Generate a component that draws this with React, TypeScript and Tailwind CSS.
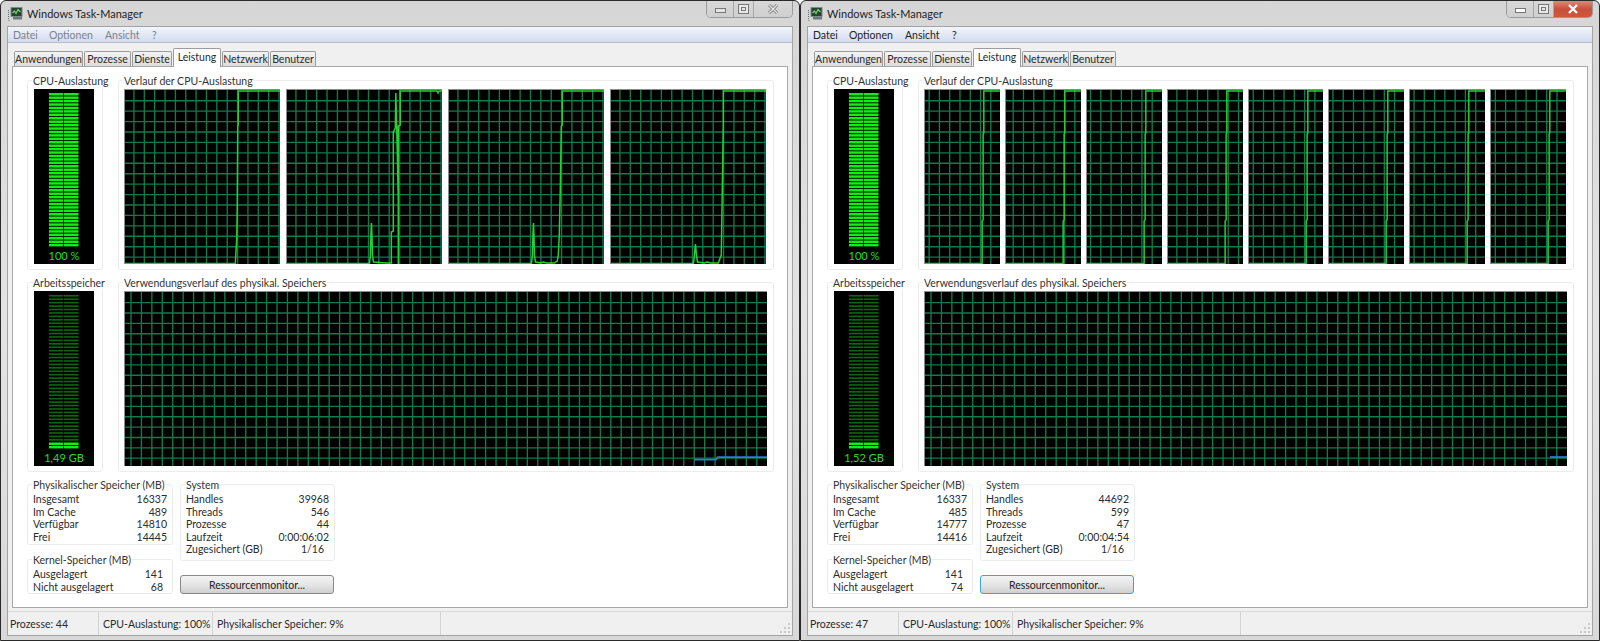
const GREEN = '#2ad032'

const LEFT_PATHS = [
  'M0 173.5 H111 L111.5 165 L112.5 148 L113 115 L113.5 36 L114 35 V1 H156',
  'M0 173.5 H83 L84 165 L84.5 144 L85 133 L85.5 144 L86 165 L87 172 L100 173 H105 V142 L107 141 V42 L109 38 L109.5 3 L110.5 40 L112 110 L112 175 M112 130 V36 L114 35 V1 H151 L152 3 L153 1 H156',
  'M0 173.5 H83 L84 165 L84.5 144 L85 133 L85.5 144 L86 165 L87 172 L92 173 L95 172 L98 173 L106 173 L109 171 L110 165 L111 145 L112 100 L113 36 L114 35 V1 H156',
  'M0 173.5 H83 L84 165 L85 154 L86 165 L87 172 L94 173 L97 172 L100 173 L108 173 L111 165 L112 100 L113 36 V1 H156',
]

const RIGHT_PATH = 'M0 173.5 H58 V131 L59 130 V44 L59.7 43 V1 H76'
const RIGHT_OFFSETS = [4.2, 7.3, 3.6, 9, 4.3, 4, 4.1, 4.4]

function Grid({ w, h, dx, dy = 10.7 }: { w: number; h: number; dx: number; dy?: number }) {
  const xs: number[] = []
  const ys: number[] = []
  for (let x = dx; x < w; x += 10.43) xs.push(x)
  for (let y = dy; y < h; y += 10.43) ys.push(y)
  return (
    <g stroke="#0f7d4a" strokeWidth="1.35">
      {xs.map(x => <line key={x} x1={x} x2={x} y1={0} y2={h} />)}
      {ys.map(y => <line key={y} x1={0} x2={w} y1={y} y2={y} />)}
    </g>
  )
}

function CpuGraph({ w, dx, path }: { w: number; dx: number; path: string }) {
  return (
    <div className="flex-1 h-full bg-black border-t border-l border-[#8c8c8c] min-w-0">
      <svg className="block w-full h-full" viewBox={`0 0 ${w} 174`} preserveAspectRatio="none">
        <Grid w={w} h={174} dx={dx} />
        <path d={path} fill="none" stroke={GREEN} strokeWidth="1.5" />
      </svg>
    </div>
  )
}

function Meter({ label, dim }: { label: string; dim?: boolean }) {
  const rows = Array.from({ length: 45 }, (_, i) => i)
  return (
    <div className="h-full bg-black flex flex-col items-center pt-[4px]">
      <svg width="30" height="155" viewBox="0 0 30 155" className="block">
        {rows.map(i => {
          const y = i * 3.43
          const lit = !dim || i > 42
          const color = lit ? '#10f010' : '#0c6a0c'
          return (
            <g key={i} fill={color}>
              <rect x="0" y={y} width="14" height={dim && !lit ? 1.6 : 2.5} />
              <rect x="15" y={y} width="14.5" height={dim && !lit ? 1.6 : 2.5} />
            </g>
          )
        })}
      </svg>
      <div className="text-[11px] leading-[14px] text-[#1fe01f] mt-[1px]">{label}</div>
    </div>
  )
}

function Group({ title, className, children }: { title: string; className: string; children: React.ReactNode }) {
  return (
    <div className={`border border-[#ececec] rounded-[3px] ${className}`}>
      <div className="-mt-[7px] ml-[4px] w-fit bg-white px-[1px] leading-[14px] text-[#333] whitespace-nowrap">{title}</div>
      {children}
    </div>
  )
}

function Rows({ rows, right }: { rows: [string, string, string?][]; right: string }) {
  return (
    <div className={`pl-[5px] mt-[1px] ${right}`}>
      {rows.map(([k, v, cls]) => (
        <div key={k} className="flex justify-between h-[12.6px] leading-[13px] text-[#2c2c2c] whitespace-nowrap">
          <span>{k}</span>
          <span className={cls}>{v}</span>
        </div>
      ))}
    </div>
  )
}

function AppIcon() {
  return (
    <svg width="15" height="14" viewBox="0 0 15 14" className="block">
      <rect x="3" y="0.5" width="11" height="9" fill="#2f3d37" stroke="#7d8a85" />
      <path d="M4.5 6 L6.5 4 L8 6.5 L10 2.5 L12.5 5" fill="none" stroke="#5fe05f" strokeWidth="1.2" />
      <rect x="5" y="10" width="9" height="2.5" fill="#6f7874" />
      <path d="M0.5 3 V12 M0.5 13.5 H2" stroke="#666" strokeWidth="1" strokeDasharray="1 1" />
    </svg>
  )
}

function Controls({ active }: { active?: boolean }) {
  return (
    <div className="flex h-[17px] w-[87px] border border-t-0 border-[#9a9a9a] rounded-b-[5px] overflow-hidden shrink-0">
      <div className="w-[27px] flex items-center justify-center border-r border-[#a8a8a8] bg-gradient-to-b from-[#d8d8d8] to-[#cfcfcf]">
        <div className={`w-[11px] h-[5px] mt-[3px] border border-[#777] ${active ? 'bg-white' : 'bg-[#e4e4e4]'}`} />
      </div>
      <div className="w-[20px] flex items-center justify-center border-r border-[#a8a8a8] bg-gradient-to-b from-[#d8d8d8] to-[#cfcfcf]">
        <div className="w-[11px] h-[10px] border border-[#777] flex items-center justify-center bg-[#e8e8e8]">
          <div className="w-[5px] h-[4px] border border-[#777]" />
        </div>
      </div>
      <div className={`flex-1 flex items-center justify-center ${active ? 'bg-gradient-to-b from-[#d98a78] via-[#c9503a] to-[#d0563a]' : 'bg-gradient-to-b from-[#d8d8d8] to-[#cfcfcf]'}`}>
        <svg width="12" height="10" viewBox="0 0 12 10">
          {active
            ? <path d="M2 1 L10 9 M10 1 L2 9" stroke="#fff" strokeWidth="2.4" />
            : <g><path d="M2 1 L10 9 M10 1 L2 9" stroke="#777" strokeWidth="3" /><path d="M2 1 L10 9 M10 1 L2 9" stroke="#e6e6e6" strokeWidth="1.4" /></g>}
        </svg>
      </div>
    </div>
  )
}

const TABS = [
  { label: 'Anwendungen', w: 'w-[69px]' },
  { label: 'Prozesse', w: 'w-[47px]' },
  { label: 'Dienste', w: 'w-[40px]' },
  { label: 'Leistung', w: 'w-[48px]', on: true },
  { label: 'Netzwerk', w: 'w-[47px]' },
  { label: 'Benutzer', w: 'w-[46px]' },
]

type WinProps = {
  active?: boolean
  memLabel: string
  blue: string
  phys: string[]
  sys: string[]
  kernel: string[]
  procs: string
  many?: boolean
}

function TaskWindow({ active, memLabel, blue, phys, sys, kernel, procs, many }: WinProps) {
  return (
    <div className="w-[800px] h-[641px] shrink-0 flex flex-col px-[6px] pb-[4px] border border-[#2a2a2a] rounded-t-[6px] bg-gradient-to-b from-[#d6d6d6] via-[#e4e4e4] to-[#d9d9d9]">
      <div className="h-[25px] flex items-start shrink-0">
        <div className="flex items-center pl-[1px] pt-[6px]">
          <AppIcon />
          <span className="ml-[4px] text-[11px] leading-[14px] text-[#222]">Windows Task-Manager</span>
        </div>
        <div className="ml-auto"><Controls active={active} /></div>
      </div>

      <div className="flex-1 flex flex-col border border-[#a3a3a3] bg-[#f0f0f0] min-h-0">
        <div className={`h-[16px] shrink-0 flex items-center pl-[5px] bg-gradient-to-b from-[#f2f5fb] to-[#d3dbee] border-b border-[#b6bccb] leading-[14px] ${active ? 'text-[#222]' : 'text-[#7c818c]'}`}>
          <span className="w-[36px]">Datei</span>
          <span className="w-[56px]">Optionen</span>
          <span className="w-[47px]">Ansicht</span>
          <span>?</span>
        </div>

        <div className="h-[23px] shrink-0 flex items-end pl-[6px] gap-[1px] relative z-10">
          {TABS.map(t => (
            <div
              key={t.label}
              className={`${t.w} flex items-center justify-center border border-[#9c9c9c] rounded-t-[2px] leading-[14px] text-[#2a2a2a] ${t.on ? 'h-[19px] bg-white border-b-0 -mb-[1px] pb-[2px]' : 'h-[15px] bg-gradient-to-b from-[#f4f4f4] to-[#dcdcdc] border-b-0'}`}
            >
              {t.label}
            </div>
          ))}
        </div>

        <div className="h-[542px] shrink-0 mx-[4px] border border-[#a8a8a8] bg-white pl-[14px] pr-[13px] pt-[13px] flex flex-col">
          <div className="flex gap-[15px] h-[190px] shrink-0">
            <Group title="CPU-Auslastung" className="w-[76px] h-full shrink-0">
              <div className="pl-[6px] pr-[8px] pt-[1px] h-[176px]"><Meter label="100 %" /></div>
            </Group>
            <Group title="Verlauf der CPU-Auslastung" className="flex-1 h-full">
              <div className={`pl-[5px] pr-[7px] pt-[1px] h-[176px] flex ${many ? 'gap-[5px]' : 'gap-[6px]'}`}>
                {many
                  ? RIGHT_OFFSETS.map(dx => <CpuGraph key={dx} w={76} dx={dx} path={RIGHT_PATH} />)
                  : LEFT_PATHS.map(p => <CpuGraph key={p} w={156} dx={9} path={p} />)}
              </div>
            </Group>
          </div>

          <div className="flex gap-[15px] h-[190px] shrink-0 mt-[12px]">
            <Group title="Arbeitsspeicher" className="w-[76px] h-full shrink-0">
              <div className="pl-[6px] pr-[8px] pt-[1px] h-[176px]"><Meter label={memLabel} dim /></div>
            </Group>
            <Group title="Verwendungsverlauf des physikal. Speichers" className="flex-1 h-full">
              <div className="pl-[5px] pr-[6px] pt-[1px] h-[176px]">
                <div className="h-full bg-black border-t border-l border-[#8c8c8c]">
                  <svg className="block w-full h-full" viewBox="0 0 642 175" preserveAspectRatio="none">
                    <Grid w={642} h={175} dx={6} />
                    <path d={blue} fill="none" stroke="#2e7be0" strokeWidth="1.8" />
                  </svg>
                </div>
              </div>
            </Group>
          </div>

          <div className="flex gap-[7px] mt-[12px]">
            <div className="w-[146px] shrink-0">
              <Group title="Physikalischer Speicher (MB)" className="h-[61px]">
                <Rows right="pr-[5px]" rows={[['Insgesamt', phys[0]], ['Im Cache', phys[1]], ['Verfügbar', phys[2]], ['Frei', phys[3]]]} />
              </Group>
              <Group title="Kernel-Speicher (MB)" className="h-[35px] mt-[14px]">
                <Rows right="pr-[9px]" rows={[['Ausgelagert', kernel[0]], ['Nicht ausgelagert', kernel[1]]]} />
              </Group>
            </div>
            <div className="w-[155px] shrink-0">
              <Group title="System" className="h-[77px]">
                <Rows
                  right="pr-[5px]"
                  rows={[
                    ['Handles', sys[0]],
                    ['Threads', sys[1]],
                    ['Prozesse', sys[2]],
                    ['Laufzeit', sys[3]],
                    ['Zugesichert (GB)', '1/16', 'pr-[5px]'],
                  ]}
                />
              </Group>
              <div className={`mt-[14px] w-[154px] h-[19px] rounded-[3px] flex items-center justify-center leading-[14px] text-[#222] bg-gradient-to-b from-[#f3f3f3] via-[#e6e6e6] to-[#cfcfcf] border ${active ? 'border-[#3aa6d8]' : 'border-[#8a8a8a]'}`}>
                Ressourcenmonitor...
              </div>
            </div>
          </div>
        </div>

        <div className="flex-1 mt-[3px] flex items-center border-t border-[#dcdcdc] leading-[14px] text-[#2a2a2a]">
          <div className="w-[91px] pl-[2px] h-full flex items-center border-r border-[#d4d4d4]">Prozesse: {procs}</div>
          <div className="w-[114px] pl-[4px] h-full flex items-center border-r border-[#d4d4d4] whitespace-nowrap">CPU-Auslastung: 100%</div>
          <div className="w-[228px] pl-[4px] h-full flex items-center border-r border-[#d4d4d4] whitespace-nowrap">Physikalischer Speicher: 9%</div>
          <div className="flex-1" />
          <svg width="12" height="12" viewBox="0 0 12 12" className="self-end mr-[1px] mb-[1px]" fill="#c8c8c8">
            <rect x="9" y="1" width="2" height="2" /><rect x="5" y="5" width="2" height="2" /><rect x="9" y="5" width="2" height="2" />
            <rect x="1" y="9" width="2" height="2" /><rect x="5" y="9" width="2" height="2" /><rect x="9" y="9" width="2" height="2" />
          </svg>
        </div>
      </div>
    </div>
  )
}

export default function App() {
  return (
    <div className="w-[1600px] h-[641px] overflow-hidden flex bg-white text-[10.5px] [font-family:Lato,sans-serif]">
      <TaskWindow
        memLabel="1,49 GB"
        blue="M569 168.5 H591 L593 166 H642"
        phys={['16337', '489', '14810', '14445']}
        kernel={['141', '68']}
        sys={['39968', '546', '44', '0:00:06:02']}
        procs="44"
      />
      <TaskWindow
        active
        many
        memLabel="1,52 GB"
        blue="M625 166 H642"
        phys={['16337', '485', '14777', '14416']}
        kernel={['141', '74']}
        sys={['44692', '599', '47', '0:00:04:54']}
        procs="47"
      />
    </div>
  )
}
